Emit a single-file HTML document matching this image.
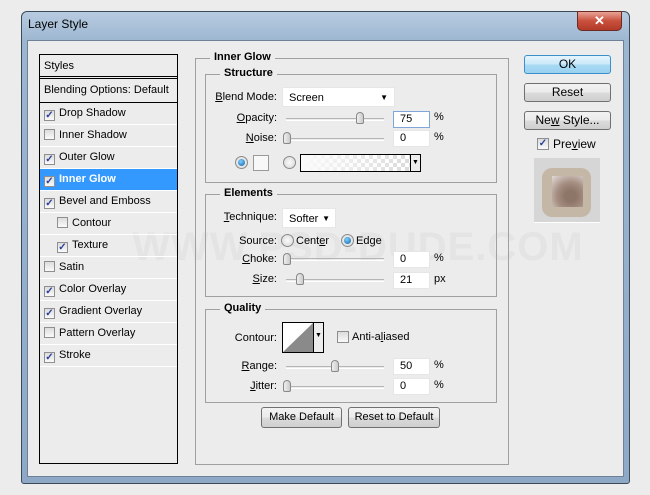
<!DOCTYPE html>
<html><head><style>
*{margin:0;padding:0;box-sizing:border-box}
body{width:650px;height:495px;background:#ececec;position:relative;overflow:hidden;font-family:"Liberation Sans",sans-serif;font-size:11px;color:#000}
.a{position:absolute}
.frame{left:21px;top:11px;width:609px;height:473px;border:1px solid #3a4a5a;border-radius:6px 6px 3px 3px;background:linear-gradient(180deg,#b7cbe0 0,#9cb6d0 30px,#8ea9c6 100%)}
.client{left:27px;top:40px;width:597px;height:437px;background:#ececec;border:1px solid #6f8198}
.title{left:28px;top:17px;font-size:12px;color:#000}
.close{left:577px;top:11px;width:45px;height:20px;border:1px solid #6b2a22;border-radius:0 0 5px 5px;background:linear-gradient(#e8a497,#c8503c 50%,#b23a28);color:#fff;text-align:center;font-weight:bold;font-size:13px;line-height:18px}
.list{left:39px;top:54px;width:139px;height:410px;border:1px solid #000;background:#ececec}
.row{position:absolute;left:0;width:137px;height:22px;border-bottom:1px solid #fff;line-height:21px;padding-left:4px;white-space:nowrap}
.cb{display:inline-block;width:11px;height:11px;border:1px solid #8f8f8f;background:linear-gradient(#dcdcdc,#fafafa);vertical-align:-2px;margin-right:4px;position:relative;font-size:10px;line-height:9px;color:#2a3f9a;text-align:center;font-weight:bold}
.fs{position:absolute;border:1px solid #a0a0a0}
.lg{position:absolute;background:#ececec;font-weight:bold;padding:0 4px;font-size:11px}
.in{position:absolute;background:#fff;height:20px;line-height:20px;padding-left:6px;border:1px solid #e6e6e6}
.lab{position:absolute;text-align:right}
.sl{position:absolute;height:3px;border-top:1px solid #b5b5b5;border-bottom:1px solid #fff}
.th{position:absolute;width:8px;height:12px;border:1px solid #888;border-radius:4px 4px 2px 2px;background:linear-gradient(90deg,#eee,#ccc)}
.btn{position:absolute;border:1px solid #707070;border-radius:3px;background:linear-gradient(#f2f2f2 0,#ebebeb 50%,#dcdcdc 50%,#cfcfcf);text-align:center;font-size:11px}
.rad{position:absolute;width:13px;height:13px;border-radius:50%;border:1px solid #8a8a8a;background:radial-gradient(#fafafa,#d6d6d6)}
.rad.on::after{content:"";position:absolute;left:2px;top:2px;width:7px;height:7px;border-radius:50%;background:radial-gradient(circle at 40% 35%,#7fd0ff,#0d5fa8)}
u{text-decoration:underline}
</style></head><body>
<div class="a frame"></div>
<div class="a title">Layer Style</div>
<div class="a close">✕</div>
<div class="a client"></div>

<div class="a" style="left:118px;top:225px;width:480px;text-align:center;font-family:'Liberation Sans',sans-serif;font-weight:bold;font-size:40px;color:#e4e4e4;letter-spacing:1px">WWW.PSD-DUDE.COM</div>

<div class="a list" style="background:transparent">
 <div class="row" style="top:0;height:24px;line-height:22px;border-bottom:3px double #000">Styles</div>
 <div class="row" style="top:24px;height:24px;line-height:22px;border-bottom:1px solid #000">Blending Options: Default</div>
 <div class="row" style="top:48px"><span class="cb">✓</span>Drop Shadow</div>
 <div class="row" style="top:70px"><span class="cb"></span>Inner Shadow</div>
 <div class="row" style="top:92px"><span class="cb">✓</span>Outer Glow</div>
 <div class="row" style="top:114px;background:#3399ff;color:#fff;font-weight:bold"><span class="cb">✓</span>Inner Glow</div>
 <div class="row" style="top:136px"><span class="cb">✓</span>Bevel and Emboss</div>
 <div class="row" style="top:158px;padding-left:17px"><span class="cb"></span>Contour</div>
 <div class="row" style="top:180px;padding-left:17px"><span class="cb">✓</span>Texture</div>
 <div class="row" style="top:202px"><span class="cb"></span>Satin</div>
 <div class="row" style="top:224px"><span class="cb">✓</span>Color Overlay</div>
 <div class="row" style="top:246px"><span class="cb">✓</span>Gradient Overlay</div>
 <div class="row" style="top:268px"><span class="cb"></span>Pattern Overlay</div>
 <div class="row" style="top:290px"><span class="cb">✓</span>Stroke</div>
</div>

<div class="fs" style="left:195px;top:58px;width:314px;height:407px"></div>
<div class="lg" style="left:210px;top:51px">Inner Glow</div>

<div class="fs" style="left:205px;top:74px;width:292px;height:109px"></div>
<div class="lg" style="left:220px;top:67px">Structure</div>
<div class="lab" style="left:205px;top:91px;width:72px"><u>B</u>lend Mode:</div>
<div class="in" style="left:282px;top:87px;width:113px">Screen<span style="position:absolute;right:6px;top:0;font-size:8px">▼</span></div>
<div class="lab" style="left:205px;top:112px;width:72px"><u>O</u>pacity:</div>
<div class="sl" style="left:286px;top:118px;width:98px"></div><div class="th" style="left:356px;top:112px"></div>
<div class="in" style="left:393px;top:111px;width:37px;height:17px;line-height:15px;border:1px solid #7fa6d6">75</div><div class="a" style="left:434px;top:111px">%</div>
<div class="lab" style="left:205px;top:132px;width:72px"><u>N</u>oise:</div>
<div class="sl" style="left:286px;top:138px;width:98px"></div><div class="th" style="left:283px;top:132px"></div>
<div class="in" style="left:393px;top:130px;width:37px;height:17px;line-height:15px">0</div><div class="a" style="left:434px;top:131px">%</div>
<div class="rad on" style="left:235px;top:156px"></div>
<div class="a" style="left:253px;top:155px;width:16px;height:16px;border:1px solid #999;background:#f8f8f8"></div>
<div class="rad" style="left:283px;top:156px"></div>
<div class="a" style="left:300px;top:154px;width:121px;height:18px;border:1px solid #000;background:linear-gradient(90deg,#fafafa,rgba(250,250,250,0)),repeating-conic-gradient(#d8d8d8 0 25%,#fff 0 50%) 0 0/8px 8px"><div style="position:absolute;right:0;top:0;width:10px;height:16px;border-left:1px solid #000;background:#ececec;font-size:7px;text-align:center;line-height:16px">▼</div></div>

<div class="fs" style="left:205px;top:194px;width:292px;height:103px"></div>
<div class="lg" style="left:220px;top:187px">Elements</div>
<div class="lab" style="left:205px;top:211px;width:72px"><u>T</u>echnique:</div>
<div class="in" style="left:282px;top:208px;width:54px">Softer<span style="position:absolute;right:5px;top:0;font-size:8px">▼</span></div>
<div class="lab" style="left:205px;top:235px;width:72px">Source:</div>
<div class="rad" style="left:281px;top:234px"></div><div class="a" style="left:296px;top:235px">Cent<u>e</u>r</div>
<div class="rad on" style="left:341px;top:234px"></div><div class="a" style="left:356px;top:235px">Ed<u>g</u>e</div>
<div class="lab" style="left:205px;top:253px;width:72px"><u>C</u>hoke:</div>
<div class="sl" style="left:286px;top:258px;width:98px"></div><div class="th" style="left:283px;top:253px"></div>
<div class="in" style="left:393px;top:251px;width:37px;height:17px;line-height:15px">0</div><div class="a" style="left:434px;top:252px">%</div>
<div class="lab" style="left:205px;top:273px;width:72px"><u>S</u>ize:</div>
<div class="sl" style="left:286px;top:279px;width:98px"></div><div class="th" style="left:296px;top:273px"></div>
<div class="in" style="left:393px;top:272px;width:37px;height:17px;line-height:15px">21</div><div class="a" style="left:434px;top:273px">px</div>

<div class="fs" style="left:205px;top:309px;width:292px;height:94px"></div>
<div class="lg" style="left:220px;top:302px">Quality</div>
<div class="lab" style="left:205px;top:332px;width:72px">Contour:</div>
<div class="a" style="left:282px;top:322px;width:42px;height:31px;border:1px solid #000;background:#ececec">
 <svg width="30" height="29" style="position:absolute;left:0;top:0;background:#fff"><polygon points="0,29 30,0 30,29" fill="#8a8a8a"/></svg>
 <div style="position:absolute;left:30px;top:0;width:10px;height:29px;border-left:1px solid #000;font-size:7px;text-align:center;line-height:26px">▼</div>
</div>
<span class="cb" style="position:absolute;left:337px;top:331px;width:12px;height:12px"></span>
<div class="a" style="left:352px;top:331px">Anti-a<u>l</u>iased</div>
<div class="lab" style="left:205px;top:360px;width:72px"><u>R</u>ange:</div>
<div class="sl" style="left:286px;top:366px;width:98px"></div><div class="th" style="left:331px;top:360px"></div>
<div class="in" style="left:393px;top:358px;width:37px;height:17px;line-height:15px">50</div><div class="a" style="left:434px;top:359px">%</div>
<div class="lab" style="left:205px;top:380px;width:72px"><u>J</u>itter:</div>
<div class="sl" style="left:286px;top:386px;width:98px"></div><div class="th" style="left:283px;top:380px"></div>
<div class="in" style="left:393px;top:378px;width:37px;height:17px;line-height:15px">0</div><div class="a" style="left:434px;top:379px">%</div>

<div class="btn" style="left:261px;top:407px;width:81px;height:21px;line-height:19px">Make Default</div>
<div class="btn" style="left:348px;top:407px;width:92px;height:21px;line-height:19px">Reset to Default</div>

<div class="btn" style="left:524px;top:55px;width:87px;height:19px;line-height:17px;border-color:#3c8fc8;background:linear-gradient(#e6f5fd,#c8e8f9 50%,#a9daf4 50%,#9ad2f0);font-size:12px">OK</div>
<div class="btn" style="left:524px;top:83px;width:87px;height:19px;line-height:17px;font-size:12px">Reset</div>
<div class="btn" style="left:524px;top:111px;width:87px;height:19px;line-height:17px;font-size:12px">Ne<u>w</u> Style...</div>
<span class="cb" style="position:absolute;left:537px;top:138px;width:12px;height:12px">✓</span>
<div class="a" style="left:553px;top:137px;font-size:12px">Pre<u>v</u>iew</div>
<div class="a" style="left:534px;top:158px;width:66px;height:65px;background:#d6d6d6;border-bottom:1px solid #fff">
 <div style="position:absolute;left:8px;top:10px;width:49px;height:49px;border-radius:10px;background:#c4b7a5"></div>
 <div style="position:absolute;left:18px;top:18px;width:31px;height:31px;background:radial-gradient(circle at 60% 65%,#8d7567 20%,#a48d81 50%,#ddd3cf 95%)"></div>
</div>
</body></html>
